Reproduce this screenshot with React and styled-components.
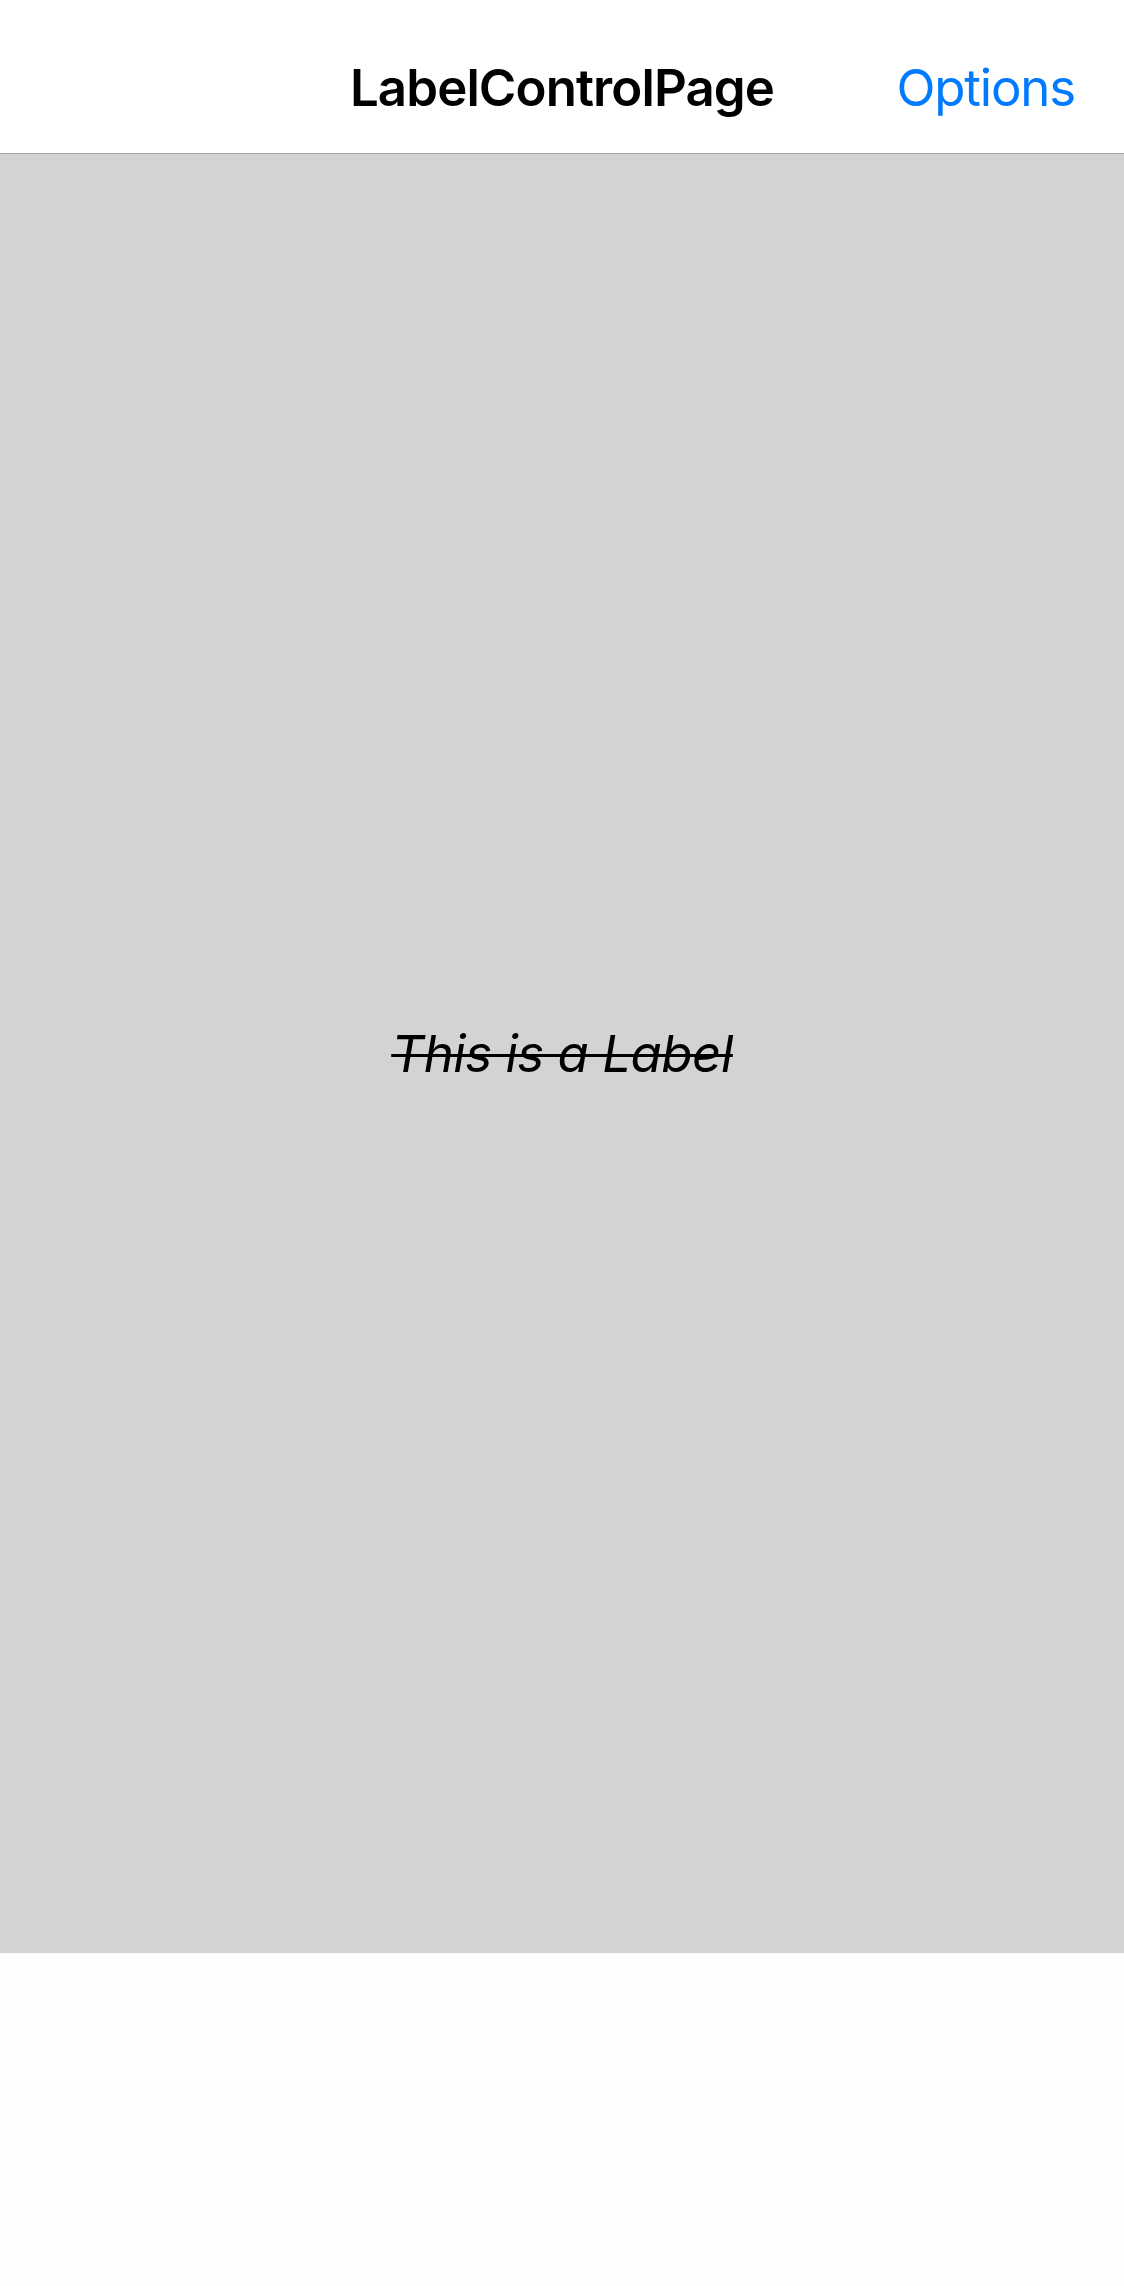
import React from "react";
import styled, { createGlobalStyle } from "styled-components";

const Global = createGlobalStyle`
  html, body { margin: 0; padding: 0; background: #fefefe; }
  body { font-family: Inter, "Liberation Sans", sans-serif; -webkit-font-smoothing: antialiased; }
`;

const Screen = styled.div`
  width: 1124px;
  height: 2286px;
  display: flex;
  flex-direction: column;
  background: #fefefe;
`;

const NavBar = styled.header`
  height: 154px;
  box-sizing: border-box;
  padding: 22px 49px 0;
  background: #ffffff;
  border-bottom: 1px solid #a6a6a6;
  display: grid;
  grid-template-columns: 1fr auto 1fr;
  align-items: center;
`;

const Title = styled.h1`
  grid-column: 2;
  margin: 0;
  font-size: 51px;
  font-weight: 600;
  letter-spacing: -0.9px;
  color: #000;
`;

const NavButton = styled.button`
  grid-column: 3;
  justify-self: end;
  border: 0;
  background: none;
  padding: 0;
  font-family: inherit;
  font-size: 51px;
  font-weight: 400;
  letter-spacing: -1.2px;
  color: #007aff;
  cursor: pointer;
`;

const Content = styled.main`
  height: 1799px;
  background: #d3d3d3;
  display: flex;
  align-items: center;
  justify-content: center;
`;

const Label = styled.span`
  font-size: 51px;
  font-style: italic;
  color: #000;
  text-decoration: line-through;
  text-decoration-thickness: 3px;
  letter-spacing: -0.5px;
`;

export default function App() {
  return (
    <>
      <Global />
      <Screen>
        <NavBar>
          <Title>LabelControlPage</Title>
          <NavButton>Options</NavButton>
        </NavBar>
        <Content>
          <Label>This is a Label</Label>
        </Content>
      </Screen>
    </>
  );
}
